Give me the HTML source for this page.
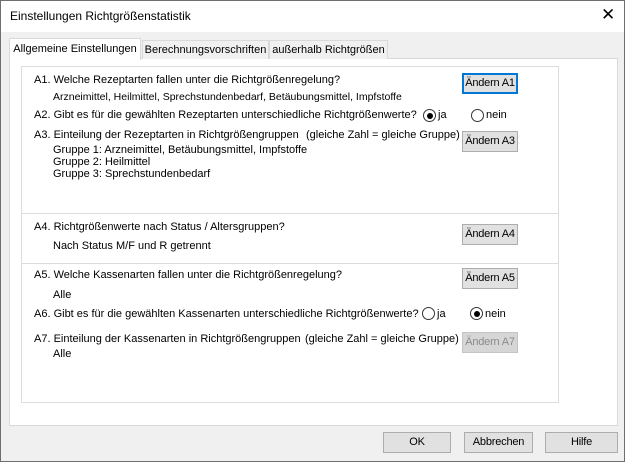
<!DOCTYPE html>
<html><head><style>
body{margin:0;width:625px;height:462px;overflow:hidden;font-family:"Liberation Sans",sans-serif;font-size:11px;color:#000}
.win{position:absolute;left:0;top:0;width:623px;height:460px;border:1px solid #6e6e6e;background:#f0f0f0}
.title{position:absolute;left:0;top:0;width:623px;height:31px;background:#fff}
.t{position:absolute;white-space:nowrap}
.panel{position:absolute;left:8px;top:57px;width:607px;height:366px;background:#fff;border:1px solid #d9d9d9}
.tab{position:absolute;top:39px;height:18px;border:1px solid #d9d9d9;border-bottom:none;background:#f0f0f0;text-align:center;line-height:18px;white-space:nowrap;overflow:hidden}
.grp{position:absolute;left:20px;top:65px;width:536px;height:335px;border:1px solid #dcdcdc}
.sep{position:absolute;left:21px;width:536px;height:1px;background:#dcdcdc}
.btn{position:absolute;width:54px;height:19px;border:1px solid #adadad;background:#e1e1e1;text-align:center;line-height:19px;white-space:nowrap;overflow:hidden;letter-spacing:-0.2px}
.rad{position:absolute;width:11px;height:11px;border:1px solid #333;border-radius:50%;background:#fff}
.rad.on::after{content:"";position:absolute;left:2.5px;top:2.5px;width:6px;height:6px;border-radius:50%;background:#000}
</style></head><body>
<div class="win">
<div class="title"></div>
<div class="t" style="left:9px;top:8px;font-size:12px">Einstellungen Richtgrößenstatistik</div>
<div class="t" style="left:600px;top:4px;font-size:17px">✕</div>
<div class="panel"></div>
<div class="tab" style="left:141px;width:125px">Berechnungsvorschriften</div>
<div class="tab" style="left:268px;width:117px">außerhalb Richtgrößen</div>
<div class="tab" style="left:8px;top:37px;height:21px;width:130px;background:#fff;line-height:20px;z-index:2">Allgemeine Einstellungen</div>
<div class="grp"></div>
<div class="sep" style="top:212px"></div>
<div class="sep" style="top:262px"></div>
<div class="t" style="left:33px;top:73px">A1. Welche Rezeptarten fallen unter die Richtgrößenregelung?</div>
<div class="t" style="left:52px;top:90px;font-size:10.5px">Arzneimittel, Heilmittel, Sprechstundenbedarf, Betäubungsmittel, Impfstoffe</div>
<div class="t" style="left:33px;top:108px">A2. Gibt es für die gewählten Rezeptarten unterschiedliche Richtgrößenwerte?</div>
<div class="rad on" style="left:422px;top:108px"></div><div class="t" style="left:437px;top:108px">ja</div>
<div class="rad" style="left:470px;top:108px"></div><div class="t" style="left:485px;top:108px">nein</div>
<div class="t" style="left:33px;top:128px">A3. Einteilung der Rezeptarten in Richtgrößengruppen</div>
<div class="t" style="left:305px;top:128px">(gleiche Zahl = gleiche Gruppe)</div>
<div class="t" style="left:52px;top:143px;line-height:12px">Gruppe 1: Arzneimittel, Betäubungsmittel, Impfstoffe<br>Gruppe 2: Heilmittel<br>Gruppe 3: Sprechstundenbedarf</div>
<div class="t" style="left:33px;top:220px">A4. Richtgrößenwerte nach Status / Altersgruppen?</div>
<div class="t" style="left:52px;top:239px">Nach Status M/F und R getrennt</div>
<div class="t" style="left:33px;top:268px">A5. Welche Kassenarten fallen unter die Richtgrößenregelung?</div>
<div class="t" style="left:52px;top:288px">Alle</div>
<div class="t" style="left:33px;top:307px">A6. Gibt es für die gewählten Kassenarten unterschiedliche Richtgrößenwerte?</div>
<div class="rad" style="left:421px;top:306px"></div><div class="t" style="left:436px;top:307px">ja</div>
<div class="rad on" style="left:469px;top:306px"></div><div class="t" style="left:484px;top:307px">nein</div>
<div class="t" style="left:33px;top:332px">A7. Einteilung der Kassenarten in Richtgrößengruppen</div>
<div class="t" style="left:304px;top:332px">(gleiche Zahl = gleiche Gruppe)</div>
<div class="t" style="left:52px;top:347px">Alle</div>
<div class="btn" style="left:461px;top:72px;border:2px solid #0078d7;width:52px;height:17px;line-height:17px">Ändern A1</div>
<div class="btn" style="left:461px;top:130px">Ändern A3</div>
<div class="btn" style="left:461px;top:223px">Ändern A4</div>
<div class="btn" style="left:461px;top:267px">Ändern A5</div>
<div class="btn" style="left:461px;top:331px;color:#8a8a8a;border-color:#c4c4c4;background:#d6d6d6">Ändern A7</div>
<div class="btn" style="left:382px;top:431px;width:66px">OK</div>
<div class="btn" style="left:463px;top:431px;width:67px">Abbrechen</div>
<div class="btn" style="left:544px;top:431px;width:71px">Hilfe</div>
</div>
</body></html>
